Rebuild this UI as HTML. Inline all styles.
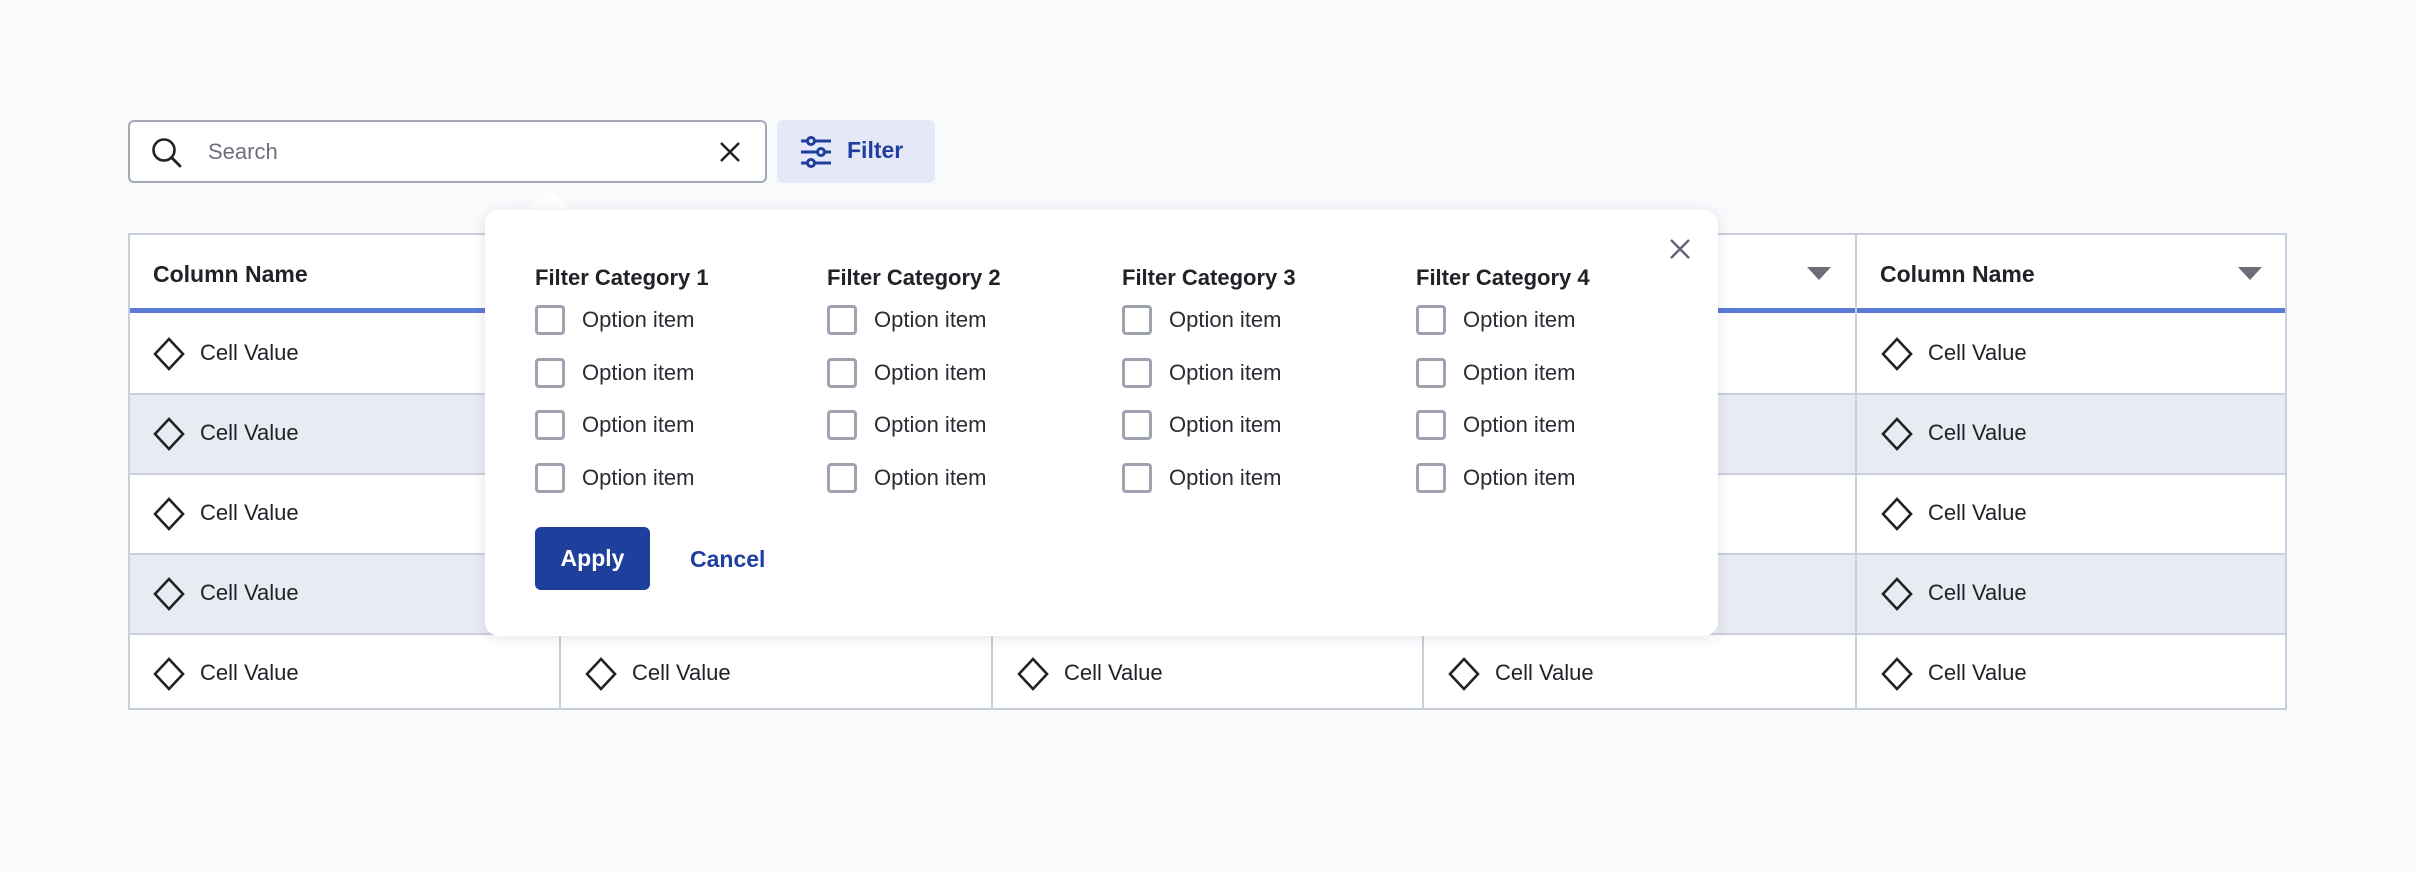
<!DOCTYPE html>
<html><head><meta charset="utf-8"><style>
*{margin:0;padding:0;box-sizing:border-box}
body{width:2416px;height:872px;background:#f9fafc;font-family:"Liberation Sans",sans-serif;position:relative;overflow:hidden;color:#202228}
.abs{position:absolute;white-space:nowrap}
.search{left:128px;top:120px;width:639px;height:63px;border:2px solid #a3a8b6;border-radius:6px;background:#fff}
.search span{position:absolute;left:78px;top:17px;font-size:22px;color:#6c707c}
.fbtn{left:777px;top:120px;width:158px;height:63px;background:#e5e8f6;border-radius:6px}
.fbtn span{position:absolute;left:70px;top:17px;font-size:23px;font-weight:bold;color:#1e3fa0}
.table{left:128px;top:233px;width:2159px;height:477px;background:#fff;border:2px solid #c8cedc}
.row{position:absolute;left:0;width:100%;height:80px;border-top:2px solid #c8cedc}
.alt{background:#e9ebf3}
.vline{position:absolute;top:0;width:2px;height:100%;background:#c8cedc}
.hd{position:absolute;top:26px;font-size:23px;font-weight:bold;white-space:nowrap}
.tri{position:absolute;top:32px;width:0;height:0;border-left:12px solid transparent;border-right:12px solid transparent;border-top:13px solid #6b6e78}
.cell{position:absolute;font-size:22px;white-space:nowrap}
.pop{left:485px;top:210px;width:1233px;height:426px;background:#fff;border-radius:14px;box-shadow:0 2px 14px rgba(40,50,80,.12)}
.cat{position:absolute;font-size:22px;font-weight:bold;white-space:nowrap}
.opt{position:absolute;font-size:22px;white-space:nowrap;color:#2a2c33}
.cb{position:absolute;width:30px;height:30px;border:3px solid #9fa3b0;border-radius:4px}
.apply{left:535px;top:527px;width:115px;height:63px;background:#1f3f9c;border-radius:6px;color:#fff;font-weight:bold;font-size:23px;text-align:center;line-height:63px}
.cancel{left:690px;top:546px;font-size:23px;font-weight:bold;color:#1e3fa0}
</style></head><body>
<div class="abs search">
<svg class="abs" style="left:20px;top:14px" width="34" height="34" viewBox="0 0 34 34"><circle cx="14" cy="14" r="10.5" fill="none" stroke="#202228" stroke-width="2.6"/><line x1="21.5" y1="21.5" x2="30" y2="30" stroke="#202228" stroke-width="2.8" stroke-linecap="round"/></svg>
<span>Search</span>
<svg class="abs" style="left:588px;top:18px" width="24" height="24" viewBox="0 0 24 24"><path d="M3 3L21 21M21 3L3 21" stroke="#202228" stroke-width="2.6"/></svg>
</div>
<div class="abs fbtn">
<svg class="abs" style="left:22px;top:15px" width="34" height="34" viewBox="0 0 34 34" fill="none" stroke="#1e3fa0" stroke-width="3"><path d="M2 6H32M2 17H32M2 28H32"/><circle cx="12" cy="6" r="3.5" fill="#e5e8f6"/><circle cx="22" cy="17" r="3.5" fill="#e5e8f6"/><circle cx="12" cy="28" r="3.5" fill="#e5e8f6"/></svg>
<span>Filter</span>
</div>
<div class="abs table">
<div class="row" style="top:78px;border-top:none"></div>
<div class="row alt" style="top:158px"></div>
<div class="row" style="top:238px"></div>
<div class="row alt" style="top:318px"></div>
<div class="row" style="top:398px"></div>
<div class="abs" style="left:0;top:73px;width:100%;height:5px;background:#5a7bd8"></div>
<div class="hd" style="left:23px">Column Name</div>
<div class="hd" style="left:1750px">Column Name</div>
<div class="tri" style="left:1677px"></div>
<div class="tri" style="left:2108px"></div>
<div class="vline" style="left:429px"></div>
<div class="vline" style="left:861px"></div>
<div class="vline" style="left:1292px"></div>
<div class="vline" style="left:1725px"></div>
<div id="cells"></div>
</div>
<svg class="abs" style="left:525px;top:189px" width="50" height="24" viewBox="0 0 50 24"><path d="M0 24L25 2L50 24Z" fill="#fff"/></svg>
<div class="abs pop">
<svg class="abs" style="left:1184px;top:28px" width="22" height="22" viewBox="0 0 22 22"><path d="M2 2L20 20M20 2L2 20" stroke="#5d6478" stroke-width="2.4"/></svg>
</div>
<div class="abs" style="left:0;top:0" id="popc"></div>
<div class="abs apply">Apply</div>
<div class="abs cancel">Cancel</div>
<script>
var c='';var xs=[23,455,887,1318,1751];var ys=[78,158,238,318,398];
for(var r=0;r<5;r++)for(var k=0;k<5;k++){if(r<4&&k>0&&k<4)continue;
var y=ys[r];c+='<svg style="position:absolute;left:'+(xs[k])+'px;top:'+(y+24)+'px" width="32" height="34" viewBox="0 0 32 34"><path d="M16 2L30 17L16 32L2 17Z" fill="none" stroke="#202228" stroke-width="2.6"/></svg><div class="cell" style="left:'+(xs[k]+47)+'px;top:'+(y+27)+'px">Cell Value</div>';}
document.getElementById('cells').innerHTML=c;
var p='';var cx=[535,827,1122,1416];var oy=[320,373,425,478];
for(var i=0;i<4;i++){p+='<div class="cat" style="left:'+cx[i]+'px;top:265px">Filter Category '+(i+1)+'</div>';
for(var j=0;j<4;j++){p+='<div class="cb" style="left:'+cx[i]+'px;top:'+(oy[j]-15)+'px"></div><div class="opt" style="left:'+(cx[i]+47)+'px;top:'+(oy[j]-13)+'px">Option item</div>';}}
document.getElementById('popc').innerHTML=p;
</script>
</body></html>
